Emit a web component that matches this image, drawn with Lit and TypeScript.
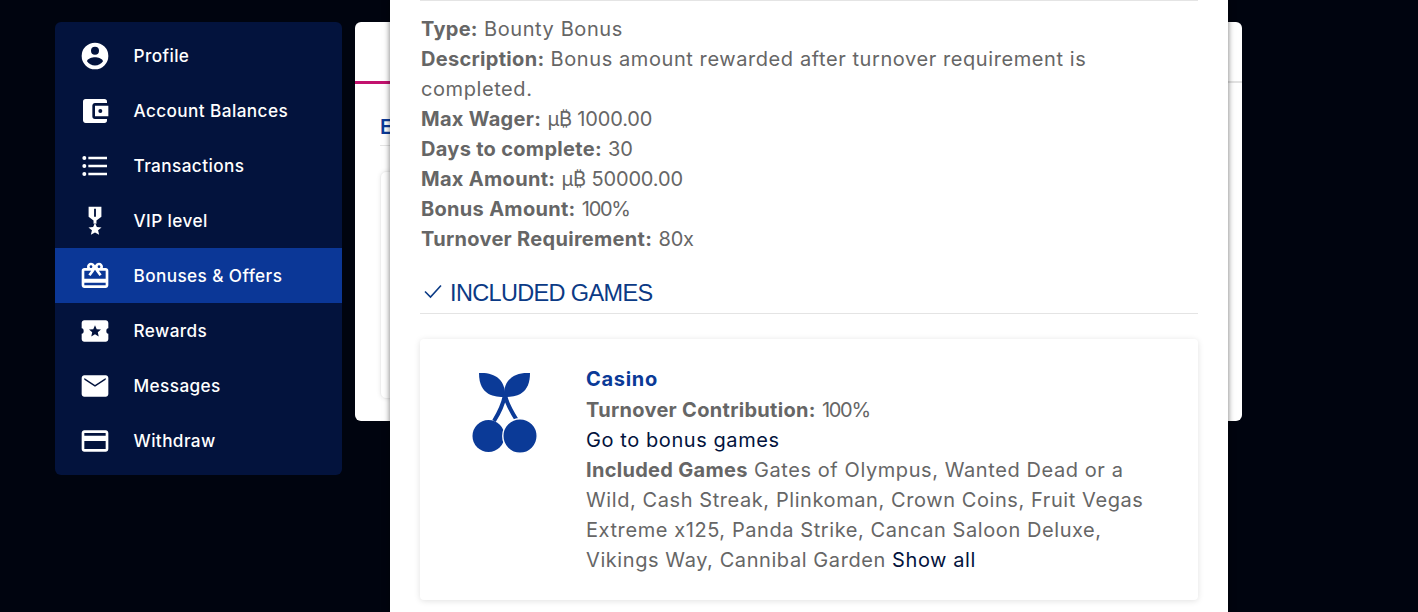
import { LitElement, html, css, svg } from "lit";
import { customElement } from "lit/decorators.js";

const ICONS: Record<string, string> = {
  profile: "M12,19.2C9.5,19.2 7.29,17.92 6,16C6.03,14 10,12.9 12,12.9C14,12.9 17.97,14 18,16C16.71,17.92 14.5,19.2 12,19.2M12,5A3,3 0 0,1 15,8A3,3 0 0,1 12,11A3,3 0 0,1 9,8A3,3 0 0,1 12,5M12,2A10,10 0 0,0 2,12A10,10 0 0,0 12,22A10,10 0 0,0 22,12A10,10 0 0,0 12,2Z",
  wallet: "M21,18V19A2,2 0 0,1 19,21H5C3.89,21 3,20.1 3,19V5A2,2 0 0,1 5,3H19A2,2 0 0,1 21,5V6H12C10.89,6 10,6.9 10,8V16A2,2 0 0,0 12,18M12,16H22V8H12M16,13.5A1.5,1.5 0 0,1 14.5,12A1.5,1.5 0 0,1 16,10.5A1.5,1.5 0 0,1 17.5,12A1.5,1.5 0 0,1 16,13.5Z",
  list: "M7,5H21V7H7V5M7,13V11H21V13H7M4,4.5A1.5,1.5 0 0,1 5.5,6A1.5,1.5 0 0,1 4,7.5A1.5,1.5 0 0,1 2.5,6A1.5,1.5 0 0,1 4,4.5M4,10.5A1.5,1.5 0 0,1 5.5,12A1.5,1.5 0 0,1 4,13.5A1.5,1.5 0 0,1 2.5,12A1.5,1.5 0 0,1 4,10.5M7,19V17H21V19H7M4,16.5A1.5,1.5 0 0,1 5.5,18A1.5,1.5 0 0,1 4,19.5A1.5,1.5 0 0,1 2.5,18A1.5,1.5 0 0,1 4,16.5Z",
  medal: "M7.2,1.4H16.8V8.8L13.1,11.6V14H10.9V11.6L7.2,8.8ZM11.3,2.9V8.8H12.7V2.9ZM12,13.4L13.4,16.5L16.9,16.8L14.3,19L15.1,22.4L12,20.6L8.9,22.4L9.7,19L7.1,16.8L10.6,16.5Z",
  gift: "M20 6h-2.18c.11-.31.18-.65.18-1 0-1.66-1.34-3-3-3-1.05 0-1.96.54-2.5 1.35l-.5.67-.5-.68C10.96 2.54 10.05 2 9 2 7.34 2 6 3.34 6 5c0 .35.07.69.18 1H4c-1.11 0-1.99.89-1.99 2L2 19c0 1.11.89 2 2 2h16c1.11 0 2-.89 2-2V8c0-1.11-.89-2-2-2zm-5-2c.55 0 1 .45 1 1s-.45 1-1 1-1-.45-1-1 .45-1 1-1zM9 4c.55 0 1 .45 1 1s-.45 1-1 1-1-.45-1-1 .45-1 1-1zm11 15H4v-2h16v2zm0-5H4V8h5.08L7 10.83 8.62 12 11 8.76l1-1.36 1 1.36L15.38 12 17 10.83 14.92 8H20v6z",
  ticket: "M22 10V6c0-1.1-.9-2-2-2H4C2.9 4 2 4.9 2 6v4c1.1 0 1.5.9 1.5 2S3.1 14 2 14v4c0 1.1.9 2 2 2h16c1.1 0 2-.9 2-2v-4c-1.1 0-1.5-.9-1.5-2s.4-2 1.5-2zM12 7.6l1.3 3 3.2.3-2.4 2.1.7 3.2-2.8-1.7-2.8 1.7.7-3.2-2.4-2.1 3.2-.3z",
  mail: "M20 4H4c-1.1 0-1.99.9-1.99 2L2 18c0 1.1.9 2 2 2h16c1.1 0 2-.9 2-2V6c0-1.1-.9-2-2-2zm0 3.4l-8 5.2-8-5.2V6l8 5.2L20 6v1.4z",
  card: "M20 4H4c-1.11 0-1.99.89-1.99 2L2 18c0 1.11.89 2 2 2h16c1.11 0 2-.89 2-2V6c0-1.11-.89-2-2-2zm0 14H4v-6h16v6zm0-10H4V6h16v2z",
};

const NAV = [
  { icon: "profile", label: "Profile" },
  { icon: "wallet", label: "Account Balances" },
  { icon: "list", label: "Transactions" },
  { icon: "medal", label: "VIP level" },
  { icon: "gift", label: "Bonuses & Offers", active: true },
  { icon: "ticket", label: "Rewards" },
  { icon: "mail", label: "Messages" },
  { icon: "card", label: "Withdraw" },
];

const DETAILS = [
  ["Type:", "Bounty Bonus", ""],
  ["Description:", "Bonus amount rewarded after turnover requirement is completed.", ""],
  ["Max Wager:", "µ₿ 1000.00", "num"],
  ["Days to complete:", "30", "num"],
  ["Max Amount:", "µ₿ 50000.00", "num"],
  ["Bonus Amount:", "100%", "pct"],
  ["Turnover Requirement:", "80x", "num"],
];

const cherry = svg`
  <svg class="cherry" viewBox="0 0 66 82" width="66" height="82">
    <path d="M7 1C22 0 34 7 33 25C23 25 7 24 7 1Z" fill="#0b3a97"/>
    <path d="M58 1C43 0 31 7 32 25C42 25 58 24 58 1Z" fill="#0b3a97"/>
    <path d="M33 23C31 33 27 41 22 49M33 23C35 33 41 42 46 50" fill="none" stroke="#0b3a97" stroke-width="4"/>
    <circle cx="16.5" cy="64" r="16" fill="#0b3a97"/>
    <circle cx="48" cy="64" r="17.2" fill="#0b3a97" stroke="#fff" stroke-width="1.4"/>
  </svg>`;

@customElement("app-root")
export class AppRoot extends LitElement {
  static styles = css`
    :host {
      display: block;
      position: relative;
      height: 612px;
      overflow: hidden;
      background: #00040f;
      font-family: "Inter", "Noto Sans", sans-serif;
    }
    .page {
      display: flex;
      align-items: flex-start;
      gap: 13px;
      padding: 22px 0 0 55px;
    }
    .sidebar {
      width: 287px;
      box-sizing: border-box;
      padding: 6px 0 7px;
      background: #03133d;
      border-radius: 6px;
    }
    .nav-item {
      display: flex;
      align-items: center;
      height: 55px;
      padding-left: 24px;
      gap: 22.5px;
      color: #fff;
      font-size: 17.2px;
      font-weight: 500;
      letter-spacing: 0.4px;
    }
    .nav-item.active { background: #0b3797; }
    .nav-item svg { width: 32px; height: 32px; fill: #fff; fill-rule: evenodd; flex: none; }
    .panel {
      width: 887px;
      height: 399px;
      box-sizing: border-box;
      background: #fff;
      border-radius: 6px;
    }
    .tabs { height: 59px; border-bottom: 2px solid #e2e2e2; position: relative; }
    .tab {
      width: 150px;
      height: 59px;
      box-sizing: content-box;
      border-bottom: 3px solid #c2126e;
      margin-bottom: -2px;
    }
    .panel-body { padding: 28px 25px 0; }
    .panel-title {
      color: #0b3a97;
      font-size: 20px;
      font-weight: 600;
      line-height: 32px;
      padding-bottom: 2px;
      border-bottom: 1px solid #e4e4e4;
    }
    .inner {
      margin-top: 25px;
      height: 226px;
      border: 1px solid #eee;
      border-radius: 6px;
      box-shadow: 0 0 4px rgba(0, 0, 0, 0.08);
    }
    .modal {
      position: absolute;
      top: 0;
      left: 390px;
      width: 838px;
      height: 612px;
      box-sizing: border-box;
      padding: 0 30px;
      background: #fff;
      box-shadow: 0 0 6px rgba(0, 0, 0, 0.55);
      overflow: hidden;
      color: #666;
      font-size: 20px;
      line-height: 30px;
      letter-spacing: 0.58px;
    }
    .details {
      border-top: 1px solid #e4e4e4;
      padding: 13px 60px 0 1px;
    }
    .details p { margin: 0; }
    b { font-weight: 700; letter-spacing: 0.3px; }
    .num { letter-spacing: -0.15px; }
    .pct { letter-spacing: -1.3px; }
    .section {
      display: flex;
      align-items: center;
      gap: 8px;
      margin-top: 13px;
      height: 47px;
      padding: 6px 4px 0;
      box-sizing: border-box;
      border-bottom: 1px solid #e4e4e4;
      color: #0b3a85;
      font-family: "Liberation Sans", Arial, sans-serif;
      font-size: 23.5px;
      letter-spacing: -0.65px;
    }
    .section svg { width: 18px; height: 18px; flex: none; margin-top: -4px; }
    .game {
      display: flex;
      margin-top: 25px;
      height: 261px;
      box-sizing: border-box;
      padding: 25px 48px 0 52px;
      border-radius: 4px;
      background: #fff;
      box-shadow: 0 1px 6px rgba(0, 0, 0, 0.12);
    }
    .cherry { flex: none; margin: 8px 48px 0 0; }
    .game-title { color: #0b3a97; font-weight: 700; letter-spacing: 0.7px; line-height: 31px; }
    a { color: #03133d; text-decoration: none; }
  `;

  render() {
    return html`
      <div class="page">
        <nav class="sidebar">
          ${NAV.map(
            (n) => html`<div class="nav-item ${n.active ? "active" : ""}">
              <svg viewBox="0 0 24 24"><path d=${ICONS[n.icon]}></path></svg>
              <span>${n.label}</span>
            </div>`
          )}
        </nav>
        <section class="panel">
          <div class="tabs"><div class="tab"></div></div>
          <div class="panel-body">
            <div class="panel-title">E</div>
            <div class="inner"></div>
          </div>
        </section>
      </div>
      <div class="modal">
        <div class="details">
          ${DETAILS.map(([k, v, c]) => html`<p><b>${k}</b> <span class=${c}>${v}</span></p>`)}
        </div>
        <div class="section">
          <svg viewBox="0 0 18 18"><path d="M1 9.5L6.5 15L17 3.5" fill="none" stroke="#0b3a85" stroke-width="1.6"></path></svg>
          <span>INCLUDED GAMES</span>
        </div>
        <div class="game">
          ${cherry}
          <div>
            <div class="game-title">Casino</div>
            <div><b>Turnover Contribution:</b> <span class="pct">100%</span></div>
            <div><a href="#">Go to bonus games</a></div>
            <div>
              <b>Included Games</b> Gates of Olympus, Wanted Dead or a Wild, Cash Streak, Plinkoman, Crown Coins, Fruit Vegas Extreme x125, Panda Strike, Cancan Saloon Deluxe, Vikings Way, Cannibal Garden
              <a href="#">Show all</a>
            </div>
          </div>
        </div>
      </div>
    `;
  }
}
